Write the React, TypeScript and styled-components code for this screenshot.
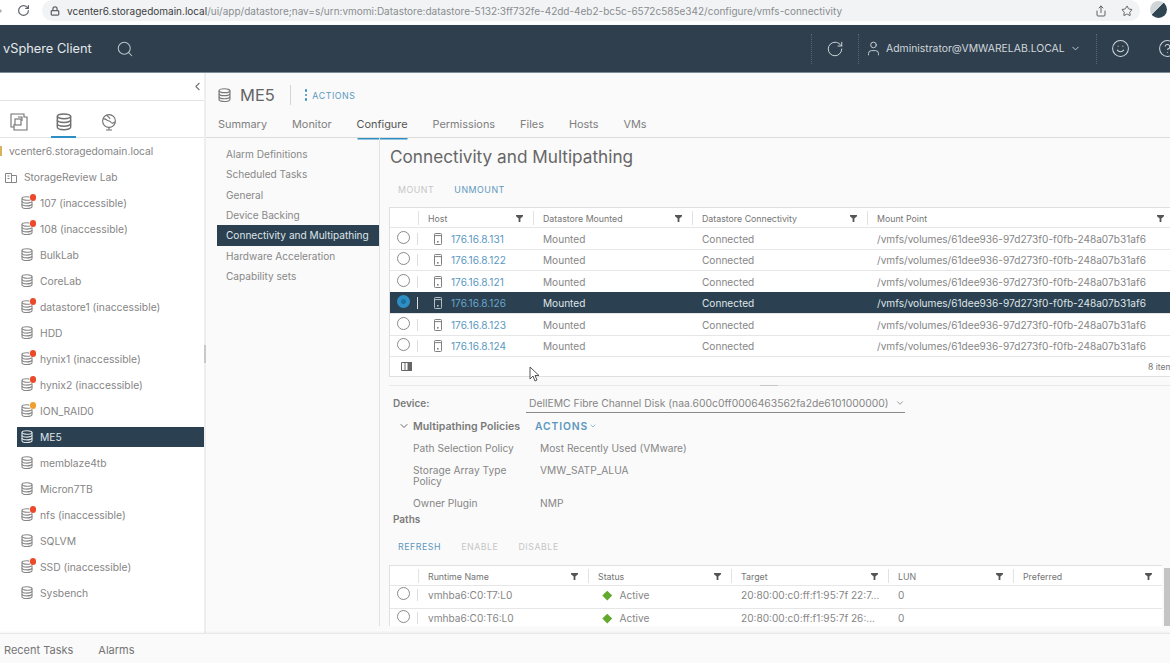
import React from "react";
import styled, { createGlobalStyle } from "styled-components";
import {
  ArrowRight,
  ChevronDown,
  ChevronLeft,
  CircleHelp,
  Lock,
  RotateCw,
  Search,
  Share,
  Smile,
  Star,
  User,
} from "lucide-react";

const GlobalStyle = createGlobalStyle`
  html, body { margin: 0; padding: 0; height: 100%; overflow: hidden; background: #fafafa; }
  * { box-sizing: border-box; }
  body { font-family: Inter, "Open Sans", "Liberation Sans", sans-serif; color: #777; }
`;

const Page = styled.div`
  position: relative;
  width: 1170px;
  height: 663px;
  display: flex;
  flex-direction: column;
  overflow: hidden;
`;

/* browser chrome */
const BrowserBar = styled.div`
  height: 24px;
  flex: none;
  display: flex;
  align-items: flex-start;
  background: #fff;
  color: #5f6368;
`;
const ForwardStub = styled.div`
  width: 15px;
  height: 21px;
  margin-left: -10px;
  display: flex;
  align-items: center;
  color: #aaa;
`;
const ReloadSlot = styled.div`
  width: 25px;
  height: 21px;
  margin-left: 12px;
  display: flex;
  align-items: center;
`;
const UrlPill = styled.div`
  width: 1098px;
  height: 21px;
  border-radius: 11px;
  background: #f1f3f4;
  display: flex;
  align-items: center;
  padding-left: 8px;
  font-size: 10px;
  white-space: nowrap;
  color: #8a8d91;
`;
const UrlHost = styled.span`
  color: #3c4043;
  margin-left: 7px;
`;
const UrlActions = styled.div`
  margin-left: auto;
  display: flex;
  align-items: center;
  gap: 14px;
  padding-right: 7px;
  color: #5f6368;
`;
const Avatar = styled.div`
  width: 17px;
  height: 17px;
  border-radius: 50%;
  margin: 1px 0 0 10px;
  background: linear-gradient(135deg, #cfd6d8 0 45%, #2f4552 45% 100%);
`;

/* vSphere header */
const Header = styled.header`
  height: 48px;
  flex: none;
  margin-top: 1px;
  display: flex;
  align-items: center;
  background: #2f3f4e;
  color: #cfd6da;
  border-bottom: 1px solid #7d8b96;
`;
const Brand = styled.div`
  width: 116px;
  padding-left: 3px;
  font-size: 12.8px;
  color: #e4e8ea;
`;
const HeaderRight = styled.div`
  margin-left: auto;
  display: flex;
  align-items: center;
  height: 100%;
  margin-right: -9px;
`;
const HeaderSlot = styled.div<{ $w: number }>`
  width: ${(p) => p.$w}px;
  height: 30px;
  display: flex;
  align-items: center;
  justify-content: center;
  border-left: 1px dotted #566673;
`;
const UserSlot = styled(HeaderSlot)`
  justify-content: flex-start;
  padding-left: 6px;
`;
const HelpSlot = styled(HeaderSlot)`
  justify-content: flex-start;
  padding-left: 14px;
  border-left: none;
`;
const UserName = styled.span`
  font-size: 10.4px;
  margin: 0 5px 0 4px;
  white-space: nowrap;
`;

/* main split */
const Main = styled.div`
  flex: 1;
  display: flex;
  min-height: 0;
`;
const Sidebar = styled.aside`
  position: relative;
  width: 206px;
  flex: none;
  border-right: 2px solid #eee;
  background: #fff;
  display: flex;
  flex-direction: column;
`;
const SplitGrip = styled.span`
  position: absolute;
  right: -2px;
  top: 272px;
  width: 2px;
  height: 18px;
  background: #c9c9c9;
`;
const CollapseRow = styled.div`
  height: 28px;
  display: flex;
  align-items: center;
  justify-content: flex-end;
  padding-right: 0;
  border-bottom: 1px solid #e4e4e4;
  color: #777;
`;
const TreeTabs = styled.div`
  height: 37px;
  display: flex;
  align-items: center;
  border-bottom: 1px solid #e4e4e4;
  padding-left: 6px;
  gap: 20px;
`;
const TreeTab = styled.div<{ $on?: boolean }>`
  width: 25px;
  height: 37px;
  padding-top: 8px;
  display: flex;
  align-items: center;
  justify-content: center;
  color: #707070;
  border-bottom: ${(p) => (p.$on ? "2px solid #2f8fc4" : "2px solid transparent")};
`;
const TreeList = styled.div`
  display: flex;
  flex-direction: column;
`;
const TreeRow = styled.div<{ $indent: number }>`
  height: 26px;
  display: flex;
  align-items: center;
  margin-left: ${(p) => p.$indent}px;
  font-size: 10.3px;
  white-space: nowrap;
  color: #868686;
`;
const TreeInner = styled.div<{ $on?: boolean; $flush?: boolean }>`
  flex: 1;
  height: 20px;
  display: flex;
  align-items: center;
  gap: 7px;
  padding-left: ${(p) => (p.$flush ? 0 : 4)}px;
  background: ${(p) => (p.$on ? "#2b4050" : "transparent")};
  color: ${(p) => (p.$on ? "#dfe5e8" : "#868686")};
`;
const IconWrap = styled.span`
  position: relative;
  display: inline-flex;
  flex: none;
`;
const Badge = styled.span<{ $warn?: boolean }>`
  position: absolute;
  top: -2px;
  right: -3px;
  width: 6.5px;
  height: 6.5px;
  border-radius: 50%;
  background: ${(p) => (p.$warn ? "#f0a030" : "#ea4a2a")};
  box-shadow: 0 0 0 0.5px #fff;
`;

const Content = styled.section`
  flex: 1;
  min-width: 0;
  display: flex;
  flex-direction: column;
  background: #fafafa;
`;
const TitleRow = styled.div`
  height: 41px;
  flex: none;
  display: flex;
  align-items: center;
  padding: 3px 0 0 12px;
`;
const ObjectName = styled.h1`
  margin: 0 15px 0 9px;
  font-size: 16.5px;
  font-weight: 400;
  color: #666;
`;
const TitleDivider = styled.span`
  width: 1px;
  height: 20px;
  background: #d5d5d5;
  margin-right: 14px;
`;
const Dots = styled.span`
  display: flex;
  flex-direction: column;
  gap: 2px;
  margin-right: 5px;
  span {
    width: 2.5px;
    height: 2.5px;
    border-radius: 50%;
    background: #3f8fbd;
  }
`;
const ActionsLink = styled.span`
  font-size: 8.8px;
  letter-spacing: 0.55px;
  color: #5a98bf;
`;
const Tabs = styled.nav`
  height: 24px;
  flex: none;
  display: flex;
  gap: 25px;
  padding-left: 12px;
  border-bottom: 1px solid #ddd;
`;
const Tab = styled.div<{ $on?: boolean }>`
  height: 24px;
  line-height: 21px;
  font-size: 10.9px;
  color: ${(p) => (p.$on ? "#555" : "#808080")};
  box-shadow: ${(p) => (p.$on ? "0 2px 0 -0.5px #2f8fc4" : "none")};
`;
const ContentBody = styled.div`
  flex: 1;
  display: flex;
  min-height: 0;
`;
const SideNav = styled.nav`
  width: 174px;
  flex: none;
  padding: 6px 0 0 11px;
  border-right: 1px solid #e2e2e2;
  margin-bottom: 7px;
`;
const NavItem = styled.div<{ $on?: boolean }>`
  height: 20.35px;
  line-height: 20.35px;
  padding-left: 9px;
  font-size: 10.1px;
  white-space: nowrap;
  background: ${(p) => (p.$on ? "#2b4050" : "transparent")};
  color: ${(p) => (p.$on ? "#dfe5e8" : "#888")};
`;
const Detail = styled.div`
  flex: 1;
  min-width: 0;
  height: 488px;
  padding-left: 9px;
  overflow: hidden;
`;
const SectionTitle = styled.h2`
  margin: 9px 0 0 1px;
  height: 20px;
  line-height: 20px;
  font-size: 17.2px;
  font-weight: 400;
  color: #666;
  white-space: nowrap;
`;
const Toolbar = styled.div<{ $top: number }>`
  height: 18px;
  margin-top: ${(p) => p.$top}px;
  display: flex;
  align-items: center;
  gap: 20px;
  padding-left: 9px;
`;
const ToolButton = styled.span<{ $off?: boolean }>`
  font-size: 8.8px;
  letter-spacing: 0.55px;
  color: ${(p) => (p.$off ? "#c6c6c6" : "#5a98bf")};
`;

/* grids */
const Table = styled.div<{ $w: number; $top: number }>`
  width: ${(p) => p.$w}px;
  margin-top: ${(p) => p.$top}px;
  background: #fff;
  border: 1px solid #e0e0e0;
  border-right: none;
  flex: none;
`;
const Row = styled.div<{ $cols: string; $on?: boolean }>`
  display: grid;
  grid-template-columns: ${(p) => p.$cols};
  height: 22.5px;
  align-items: center;
  margin-top: -1px;
  border-top: 1px solid ${(p) => (p.$on ? "#2b4050" : "#e6e6e6")};
  font-size: 10.1px;
  white-space: nowrap;
  background: ${(p) => (p.$on ? "#2b4050" : "transparent")};
  color: ${(p) => (p.$on ? "#dfe5e8" : "#868686")};
`;
const PathRow = styled(Row)`
  height: 24px;
  padding-bottom: 5px;
`;
const HeadRow = styled.div<{ $cols: string }>`
  display: grid;
  grid-template-columns: ${(p) => p.$cols};
  height: 20px;
  align-items: center;
  font-size: 8.8px;
  color: #757575;
  white-space: nowrap;
`;
const HeadCell = styled.div`
  height: 14px;
  display: flex;
  align-items: center;
  justify-content: space-between;
  padding: 0 10px 0 9px;
  border-left: 1px solid #e2e2e2;
`;
const EmptyHead = styled.div`
  height: 14px;
`;
const RadioCell = styled.div`
  display: flex;
  align-items: center;
  height: 12px;
  padding-left: 7px;
  border-right: 1px solid #ddd;
`;
const Radio = styled.span<{ $on?: boolean }>`
  width: 13px;
  height: 13px;
  margin-top: -3px;
  border-radius: 50%;
  border: ${(p) => (p.$on ? "4px solid #2f8fc4" : "1px solid #8a8a8a")};
  background: ${(p) => (p.$on ? "#1c6f9f" : "#fff")};
`;
const HostCell = styled.div<{ $on?: boolean }>`
  display: flex;
  align-items: center;
  gap: 9px;
  padding-left: 16px;
  color: ${(p) => (p.$on ? "#b5bec4" : "#808080")};
`;
const HostLink = styled.span<{ $on?: boolean }>`
  color: ${(p) => (p.$on ? "#6aa6cc" : "#5a98bf")};
`;
const Cell = styled.div`
  padding-left: 10px;
  overflow: hidden;
`;
const StatusCell = styled.div`
  display: flex;
  align-items: center;
  gap: 9px;
  padding-left: 16px;
`;
const Diamond = styled.span`
  width: 6.5px;
  height: 6.5px;
  background: #62a92e;
  transform: rotate(45deg);
`;
const TableFooter = styled.div`
  height: 20px;
  display: flex;
  align-items: center;
  padding-left: 11px;
  font-size: 8.6px;
  color: #777;
  border-top: 1px solid #e6e6e6;
  margin-top: -1px;
`;
const ItemCount = styled.span`
  margin-left: auto;
  width: 26px;
  white-space: nowrap;
`;
const Splitter = styled.div`
  margin: 8px 0 0 0;
  height: 1px;
  background: #e8e8e8;
  display: flex;
  justify-content: center;
  span {
    width: 18px;
    height: 1px;
    margin-left: -22px;
    background: #c8c8c8;
  }
`;
const DeviceRow = styled.div`
  height: 20px;
  margin-top: 7px;
  display: flex;
  align-items: center;
  padding-left: 4px;
`;
const FieldLabel = styled.span`
  width: 133px;
  font-size: 10px;
  font-weight: 600;
  color: #7a7a7a;
`;
const DeviceSelect = styled.div`
  width: 379px;
  height: 20px;
  display: flex;
  align-items: center;
  gap: 6px;
  padding-left: 3px;
  font-size: 10.35px;
  white-space: nowrap;
  color: #868686;
  border-bottom: 1px solid #8a8a8a;
`;
const PolicyHead = styled.div`
  height: 22px;
  margin-top: 2px;
  display: flex;
  align-items: center;
  padding-left: 9px;
  color: #666;
`;
const PolicyTitle = styled.span`
  width: 122px;
  margin-left: 3px;
  font-size: 10.6px;
  font-weight: 600;
  color: #7a7a7a;
`;
const PolicyAction = styled.span`
  display: flex;
  align-items: center;
  gap: 1px;
  font-size: 10.3px;
  font-weight: 600;
  letter-spacing: 0.9px;
  color: #5a98bf;
`;
const PolicyGrid = styled.dl`
  margin: 0;
  padding: 6px 0 0 24px;
  display: grid;
  grid-template-columns: 127px 1fr;
  row-gap: 11px;
  font-size: 10.2px;
  line-height: 11px;
  color: #868686;
  dt { width: 105px; }
  dd { margin: 0; }
`;
const PathsLabel = styled.div`
  margin: 4px 0 0 4px;
  height: 12px;
  line-height: 12px;
  font-size: 10px;
  font-weight: 600;
  color: #7a7a7a;
`;
const PathsWrap = styled.div`
  display: flex;
  gap: 2px;
  align-items: flex-start;
`;
const Scrollbar = styled.div`
  width: 6px;
  height: 58px;
  margin-top: 13px;
  background: #c4c4c4;
`;

const BottomBar = styled.footer`
  height: 30px;
  flex: none;
  display: flex;
  align-items: center;
  gap: 25px;
  padding: 3px 0 0 4px;
  font-size: 11px;
  color: #757575;
  background: #fafafa;
  border-top: 1px solid #e8e8e8;
  box-shadow: 0 -1px 2px rgba(0, 0, 0, 0.05);
  position: relative;
`;
const Cursor = styled.svg`
  position: absolute;
  left: 529px;
  top: 366px;
`;

const DatastoreIcon = ({ size = 12 }: { size?: number }) => (
  <svg width={size} height={size * 1.1} viewBox="0 0 12 13" fill="none" stroke="currentColor" strokeWidth="1.1">
    <ellipse cx="6" cy="2.4" rx="5" ry="1.8" />
    <path d="M1 2.4v8.2c0 1 2.2 1.8 5 1.8s5-.8 5-1.8V2.4" />
    <path d="M1 5.2c0 1 2.2 1.8 5 1.8s5-.8 5-1.8M1 8c0 1 2.2 1.8 5 1.8s5-.8 5-1.8" />
  </svg>
);

const HostIcon = () => (
  <svg width="8" height="12" viewBox="0 0 8 12" fill="none" stroke="currentColor" strokeWidth="1">
    <rect x="0.5" y="0.5" width="7" height="11" rx="0.8" />
    <path d="M.5 2.6h7" />
    <rect x="3" y="8" width="1.6" height="1.6" fill="currentColor" stroke="none" />
  </svg>
);

const FilterIcon = () => (
  <svg width="7" height="7" viewBox="0 0 7 7" fill="#555">
    <path d="M0 0h7v1.2L4.4 3.6V7H2.6V3.6L0 1.2z" />
  </svg>
);

const Head = ({ label }: { label: string }) => (
  <HeadCell>
    {label}
    <FilterIcon />
  </HeadCell>
);

const hostCols = "28px 115px 159px 175px 1fr";
const pathCols = "28px 170px 143px 157px 125px 1fr";

const tree: { name: string; badge?: "err" | "warn"; on?: boolean }[] = [
  { name: "107 (inaccessible)", badge: "err" },
  { name: "108 (inaccessible)", badge: "err" },
  { name: "BulkLab" },
  { name: "CoreLab" },
  { name: "datastore1 (inaccessible)", badge: "err" },
  { name: "HDD" },
  { name: "hynix1 (inaccessible)", badge: "err" },
  { name: "hynix2 (inaccessible)", badge: "err" },
  { name: "ION_RAID0", badge: "warn" },
  { name: "ME5", on: true },
  { name: "memblaze4tb" },
  { name: "Micron7TB" },
  { name: "nfs (inaccessible)", badge: "err" },
  { name: "SQLVM" },
  { name: "SSD (inaccessible)", badge: "err" },
  { name: "Sysbench" },
];

const navItems = [
  "Alarm Definitions",
  "Scheduled Tasks",
  "General",
  "Device Backing",
  "Connectivity and Multipathing",
  "Hardware Acceleration",
  "Capability sets",
];

const hosts = ["176.16.8.131", "176.16.8.122", "176.16.8.121", "176.16.8.126", "176.16.8.123", "176.16.8.124"];
const mountPoint = "/vmfs/volumes/61dee936-97d273f0-f0fb-248a07b31af6";

const paths = [
  { name: "vmhba6:C0:T7:L0", target: "20:80:00:c0:ff:f1:95:7f 22:7..." },
  { name: "vmhba6:C0:T6:L0", target: "20:80:00:c0:ff:f1:95:7f 26:..." },
];

export default function App() {
  return (
    <Page>
      <GlobalStyle />
      <BrowserBar>
        <ForwardStub>
          <ArrowRight size={14} />
        </ForwardStub>
        <ReloadSlot>
          <RotateCw size={13} strokeWidth={2.2} />
        </ReloadSlot>
        <UrlPill>
          <Lock size={10} strokeWidth={3} color="#5f6368" />
          <UrlHost>vcenter6.storagedomain.local</UrlHost>
          <span>
            /ui/app/datastore;nav=s/urn:vmomi:Datastore:datastore-5132:3ff732fe-42dd-4eb2-bc5c-6572c585e342/configure/vmfs-connectivity
          </span>
          <UrlActions>
            <Share size={12} />
            <Star size={12} />
          </UrlActions>
        </UrlPill>
        <Avatar />
      </BrowserBar>

      <Header>
        <Brand>vSphere Client</Brand>
        <Search size={18} strokeWidth={1.4} color="#b9c3c9" />
        <HeaderRight>
          <HeaderSlot $w={47}>
            <RotateCw size={18} strokeWidth={1.3} />
          </HeaderSlot>
          <UserSlot $w={238}>
            <User size={17} strokeWidth={1.3} />
            <UserName>Administrator@VMWARELAB.LOCAL</UserName>
            <ChevronDown size={11} />
          </UserSlot>
          <HeaderSlot $w={48}>
            <Smile size={19} strokeWidth={1.3} />
          </HeaderSlot>
          <HelpSlot $w={35}>
            <CircleHelp size={19} strokeWidth={1.3} />
          </HelpSlot>
        </HeaderRight>
      </Header>

      <Main>
        <Sidebar>
          <SplitGrip />
          <CollapseRow>
            <ChevronLeft size={13} />
          </CollapseRow>
          <TreeTabs>
            <TreeTab>
              <svg width="18" height="18" viewBox="0 0 18 18" fill="none" stroke="currentColor" strokeWidth="1.1">
                <path d="M1 1h13v3h3v13H4v-3H1z" />
                <rect x="5" y="6" width="6" height="6" />
                <path d="M8 4h4v4M4 14v-3" />
              </svg>
            </TreeTab>
            <TreeTab $on>
              <DatastoreIcon size={16} />
            </TreeTab>
            <TreeTab>
              <svg width="16" height="17" viewBox="0 0 16 17" fill="none" stroke="currentColor" strokeWidth="1.1">
                <circle cx="8" cy="7" r="6.4" />
                <path d="M2 5c3-1 4 2 6 2s2 3 4 2l2-1M6 1c0 2 3 2 3 4M5 16h6M8 13.5V16" />
              </svg>
            </TreeTab>
          </TreeTabs>
          <TreeList>
            <TreeRow $indent={0}>
              <TreeInner $flush>
                <svg width="2" height="10" viewBox="0 0 2 10">
                  <rect width="2" height="10" fill="#d9b35c" />
                </svg>
                vcenter6.storagedomain.local
              </TreeInner>
            </TreeRow>
            <TreeRow $indent={5}>
              <TreeInner $flush>
                <svg width="12" height="12" viewBox="0 0 12 12" fill="none" stroke="currentColor" strokeWidth="1">
                  <path d="M.5 2.500h6v9h-6zM6.500 4.500h5v7h-5zM2.500 5h2M2.500 7.500h2" />
                </svg>
                StorageReview Lab
              </TreeInner>
            </TreeRow>
            {tree.map((d) => (
              <TreeRow key={d.name} $indent={17}>
                <TreeInner $on={d.on}>
                  <IconWrap>
                    <DatastoreIcon />
                    {d.badge && <Badge $warn={d.badge === "warn"} />}
                  </IconWrap>
                  {d.name}
                </TreeInner>
              </TreeRow>
            ))}
          </TreeList>
        </Sidebar>

        <Content>
          <TitleRow>
            <DatastoreIcon size={13} />
            <ObjectName>ME5</ObjectName>
            <TitleDivider />
            <Dots>
              <span />
              <span />
              <span />
            </Dots>
            <ActionsLink>ACTIONS</ActionsLink>
          </TitleRow>
          <Tabs>
            <Tab>Summary</Tab>
            <Tab>Monitor</Tab>
            <Tab $on>Configure</Tab>
            <Tab>Permissions</Tab>
            <Tab>Files</Tab>
            <Tab>Hosts</Tab>
            <Tab>VMs</Tab>
          </Tabs>
          <ContentBody>
            <SideNav>
              {navItems.map((n) => (
                <NavItem key={n} $on={n === "Connectivity and Multipathing"}>
                  {n}
                </NavItem>
              ))}
            </SideNav>
            <Detail>
              <SectionTitle>Connectivity and Multipathing</SectionTitle>
              <Toolbar $top={13}>
                <ToolButton $off>MOUNT</ToolButton>
                <ToolButton>UNMOUNT</ToolButton>
              </Toolbar>
              <Table $w={785} $top={9}>
                <HeadRow $cols={hostCols}>
                  <EmptyHead />
                  <Head label="Host" />
                  <Head label="Datastore Mounted" />
                  <Head label="Datastore Connectivity" />
                  <Head label="Mount Point" />
                </HeadRow>
                {hosts.map((h, i) => (
                  <Row key={h} $cols={hostCols} $on={i === 3}>
                    <RadioCell>
                      <Radio $on={i === 3} />
                    </RadioCell>
                    <HostCell $on={i === 3}>
                      <HostIcon />
                      <HostLink $on={i === 3}>{h}</HostLink>
                    </HostCell>
                    <Cell>Mounted</Cell>
                    <Cell>Connected</Cell>
                    <Cell>{mountPoint}</Cell>
                  </Row>
                ))}
                <TableFooter>
                  <svg width="11" height="9" viewBox="0 0 11 9" fill="none" stroke="#666" strokeWidth="1">
                    <path d="M.5.5h10v8H.5zM4 .5v8M7 .5v8" />
                    <rect x="7" y="0" width="4" height="9" fill="#666" stroke="none" />
                  </svg>
                  <ItemCount>8 items</ItemCount>
                </TableFooter>
              </Table>
              <Splitter>
                <span />
              </Splitter>
              <DeviceRow>
                <FieldLabel>Device:</FieldLabel>
                <DeviceSelect>
                  DellEMC Fibre Channel Disk (naa.600c0ff0006463562fa2de6101000000)
                  <ChevronDown size={10} />
                </DeviceSelect>
              </DeviceRow>
              <PolicyHead>
                <ChevronDown size={12} />
                <PolicyTitle>Multipathing Policies</PolicyTitle>
                <PolicyAction>
                  ACTIONS
                  <ChevronDown size={8} />
                </PolicyAction>
              </PolicyHead>
              <PolicyGrid>
                <dt>Path Selection Policy</dt>
                <dd>Most Recently Used (VMware)</dd>
                <dt>Storage Array Type Policy</dt>
                <dd>VMW_SATP_ALUA</dd>
                <dt>Owner Plugin</dt>
                <dd>NMP</dd>
              </PolicyGrid>
              <PathsLabel>Paths</PathsLabel>
              <Toolbar $top={12}>
                <ToolButton>REFRESH</ToolButton>
                <ToolButton $off>ENABLE</ToolButton>
                <ToolButton $off>DISABLE</ToolButton>
              </Toolbar>
              <PathsWrap>
                <Table $w={773} $top={10}>
                  <HeadRow $cols={pathCols}>
                    <EmptyHead />
                    <Head label="Runtime Name" />
                    <Head label="Status" />
                    <Head label="Target" />
                    <Head label="LUN" />
                    <Head label="Preferred" />
                  </HeadRow>
                  {paths.map((p) => (
                    <PathRow key={p.name} $cols={pathCols}>
                      <RadioCell>
                        <Radio />
                      </RadioCell>
                      <Cell>{p.name}</Cell>
                      <StatusCell>
                        <Diamond />
                        Active
                      </StatusCell>
                      <Cell>{p.target}</Cell>
                      <Cell>0</Cell>
                      <Cell />
                    </PathRow>
                  ))}
                </Table>
                <Scrollbar />
              </PathsWrap>
            </Detail>
          </ContentBody>
        </Content>
      </Main>

      <BottomBar>
        <span>Recent Tasks</span>
        <span>Alarms</span>
      </BottomBar>
      <Cursor width="11" height="16" viewBox="0 0 11 16">
        <path d="M1 1v12l3-3 2 5 2-1-2-4.500h4z" fill="#fff" stroke="#555" strokeWidth="1" />
      </Cursor>
    </Page>
  );
}
